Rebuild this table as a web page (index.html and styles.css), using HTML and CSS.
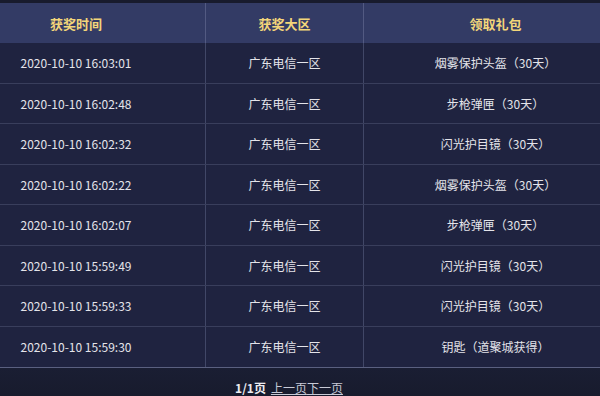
FILE: index.html
```html
<!DOCTYPE html>
<html lang="zh-CN">
<head>
<meta charset="utf-8">
<title>获奖记录</title>
<link rel="stylesheet" href="styles.css">
</head>
<body>
<div class="viewport">
  <div class="table">
    <div class="row head">
      <div class="cell">获奖时间</div>
      <div class="cell">获奖大区</div>
      <div class="cell">领取礼包</div>
    </div>
    <div class="row"><div class="cell">2020-10-10 16:03:01</div><div class="cell">广东电信一区</div><div class="cell">烟雾保护头盔（30天）</div></div>
    <div class="row"><div class="cell">2020-10-10 16:02:48</div><div class="cell">广东电信一区</div><div class="cell">步枪弹匣（30天）</div></div>
    <div class="row"><div class="cell">2020-10-10 16:02:32</div><div class="cell">广东电信一区</div><div class="cell">闪光护目镜（30天）</div></div>
    <div class="row"><div class="cell">2020-10-10 16:02:22</div><div class="cell">广东电信一区</div><div class="cell">烟雾保护头盔（30天）</div></div>
    <div class="row"><div class="cell">2020-10-10 16:02:07</div><div class="cell">广东电信一区</div><div class="cell">步枪弹匣（30天）</div></div>
    <div class="row"><div class="cell">2020-10-10 15:59:49</div><div class="cell">广东电信一区</div><div class="cell">闪光护目镜（30天）</div></div>
    <div class="row"><div class="cell">2020-10-10 15:59:33</div><div class="cell">广东电信一区</div><div class="cell">闪光护目镜（30天）</div></div>
    <div class="row last"><div class="cell">2020-10-10 15:59:30</div><div class="cell">广东电信一区</div><div class="cell">钥匙（道聚城获得）</div></div>
  </div>
  <div class="pager">
    <span class="count">1/1页</span>
    <a class="link" href="#">上一页</a><a class="link" href="#">下一页</a>
  </div>
</div>
</body>
</html>
```

FILE: styles.css
```css
html, body {
  margin: 0;
  padding: 0;
  background: #1a1d30;
  overflow: hidden;
}
body {
  width: 600px;
  height: 396px;
  font-family: "Noto Sans CJK SC", "Noto Sans", sans-serif;
  font-size: 12px;
  color: #e4e4ea;
}
.viewport {
  width: 600px;
  height: 396px;
  overflow: hidden;
  padding-top: 3px;
  box-sizing: border-box;
  background: #181b2d;
}
.table {
  width: 680px;
  margin-left: -53px;
  border-bottom: 1px solid #5a6080;
}
.row {
  display: grid;
  grid-template-columns: 258px 158px 264px;
  height: 40.5px;
  box-sizing: border-box;
  background: #1f2340;
  border-bottom: 1px solid #393e5c;
}
.row.last {
  border-bottom: none;
}
.row.head {
  height: 40px;
  background: #333b65;
  border-bottom: none;
}
.cell {
  display: flex;
  align-items: center;
  justify-content: center;
  white-space: nowrap;
}
.cell + .cell {
  border-left: 1px solid #414767;
}
.head .cell {
  color: #f3d67a;
  font-size: 13px;
  font-weight: bold;
}
.head .cell + .cell {
  border-left-color: #535a82;
}
.pager {
  height: 38px;
  display: flex;
  align-items: center;
  justify-content: center;
  padding-right: 22px;
  background: linear-gradient(#1a1e33, #171a2b);
  color: #e0e0e6;
}
.count {
  margin-right: 5px;
  font-weight: bold;
  color: #ececf2;
}
.link {
  color: #c8cad6;
  text-decoration: underline;
}
```
